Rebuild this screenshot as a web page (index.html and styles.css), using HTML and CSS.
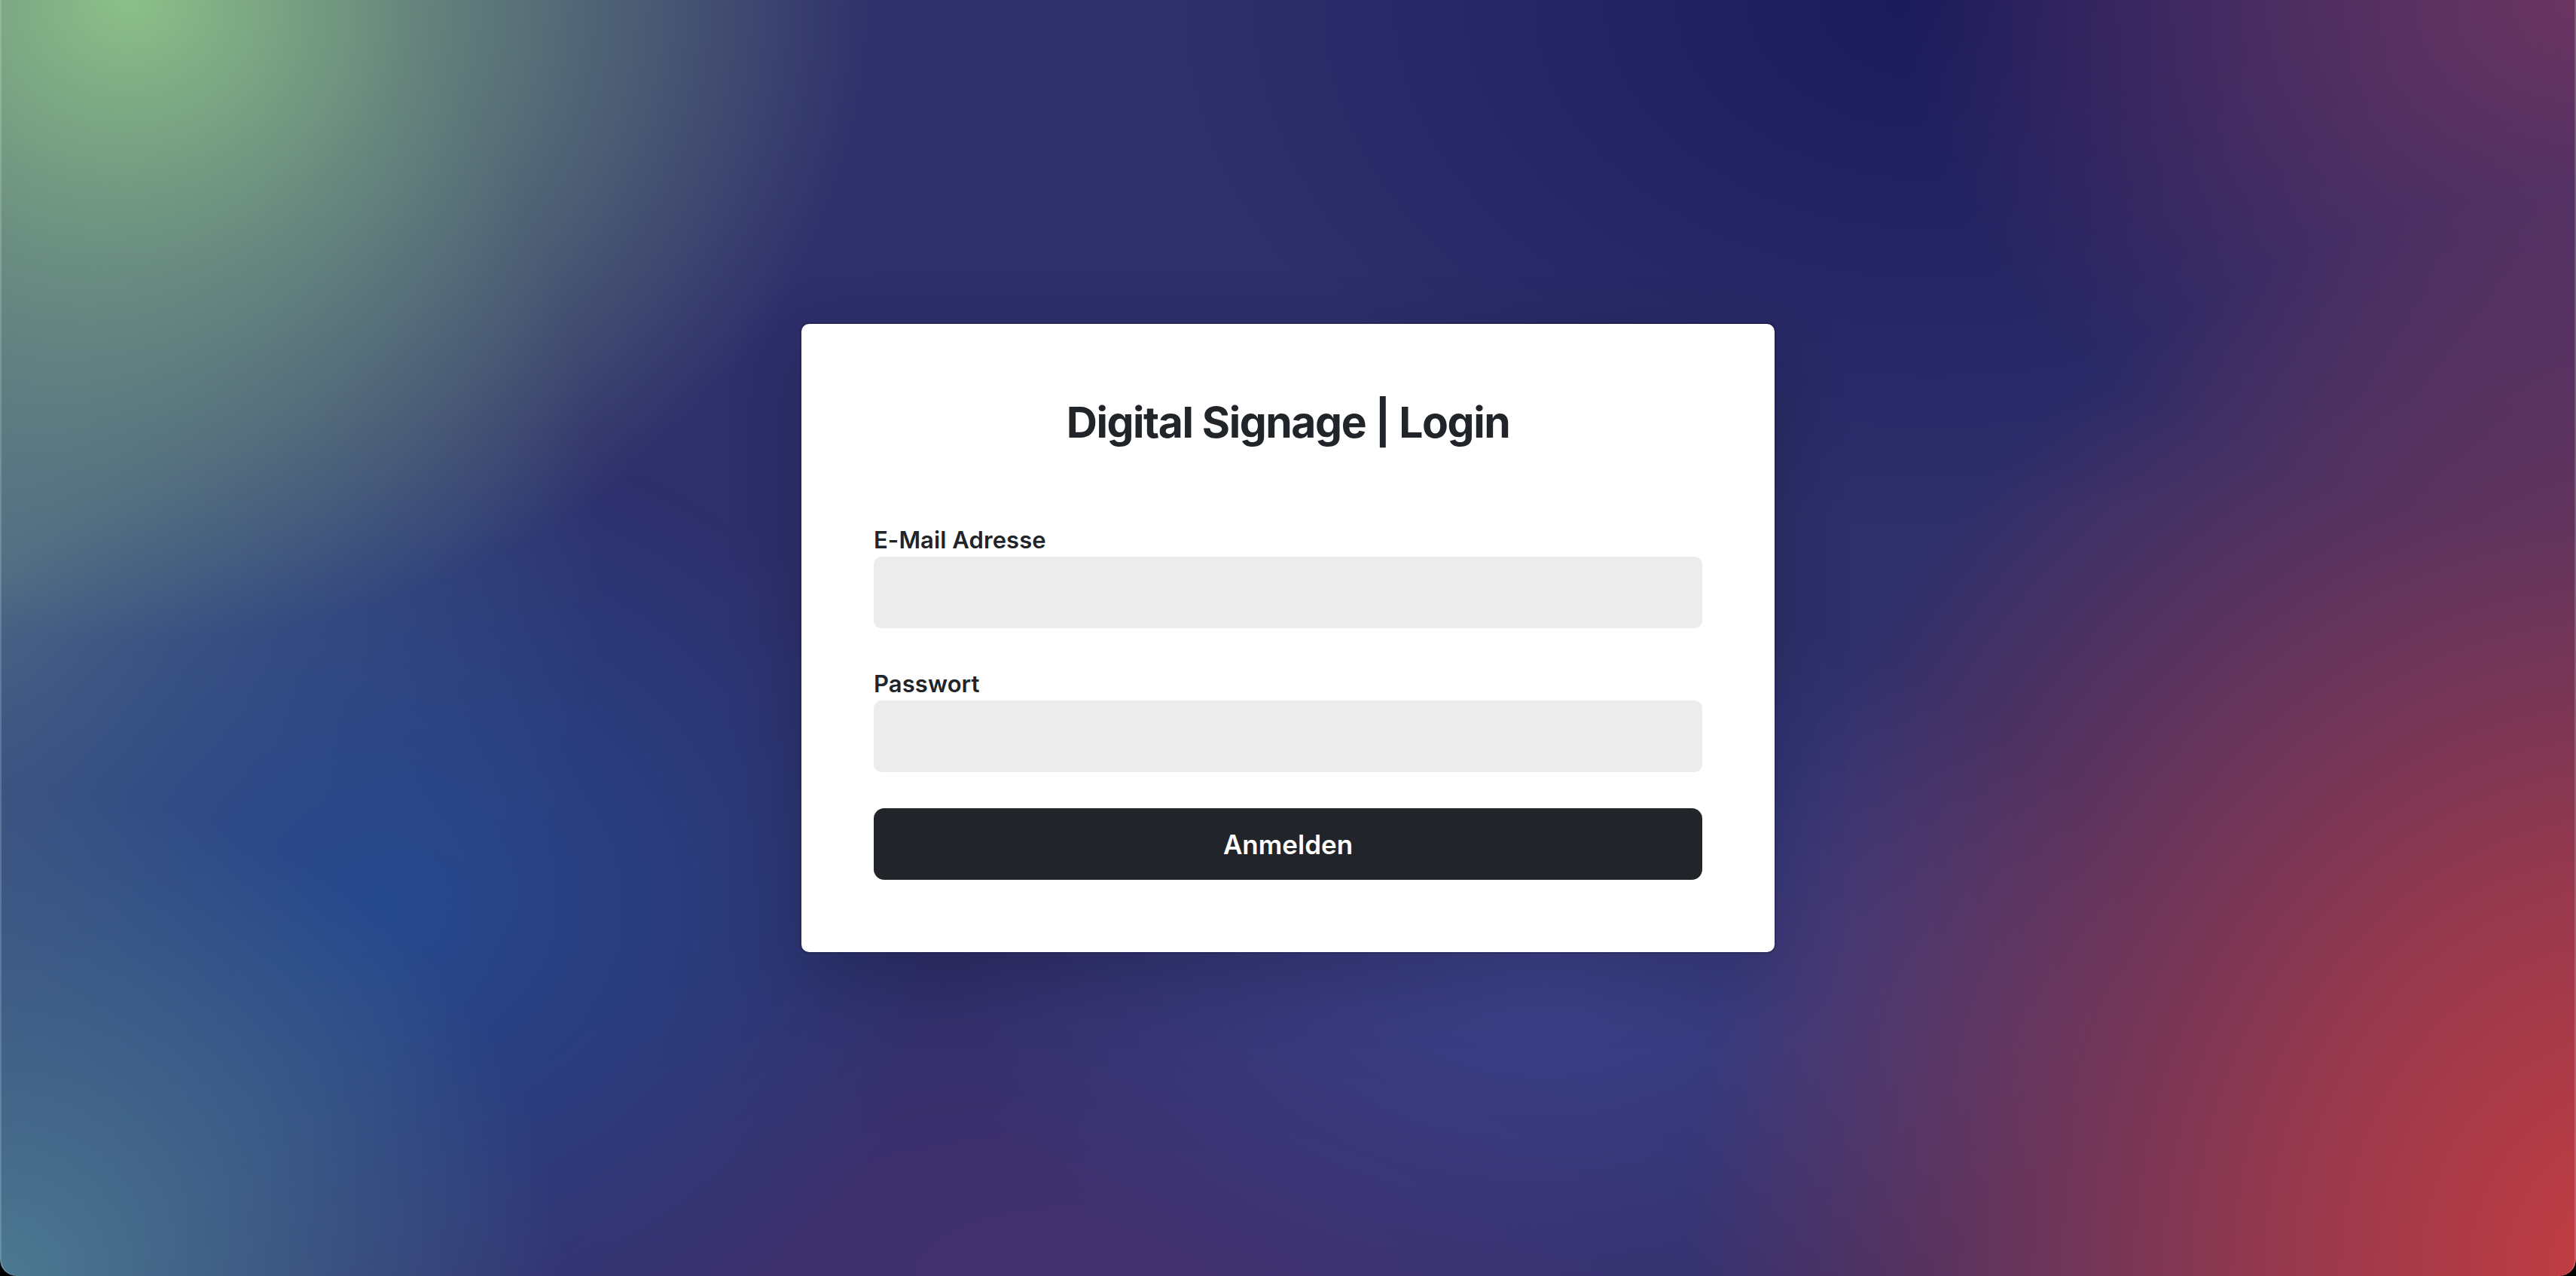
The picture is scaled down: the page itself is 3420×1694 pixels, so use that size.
FILE: index.html
```html
<!DOCTYPE html>
<html lang="de">
<head>
<meta charset="utf-8">
<title>Digital Signage | Login</title>
<link rel="stylesheet" href="styles.css">
</head>
<body>
<div class="window">
  <main class="card">
    <h1 class="title">Digital Signage | Login</h1>
    <form class="form">
      <div class="field">
        <label class="label" for="email">E-Mail Adresse</label>
        <input class="input" id="email" type="email">
      </div>
      <div class="field">
        <label class="label" for="password">Passwort</label>
        <input class="input" id="password" type="password">
      </div>
      <button class="btn" type="button">Anmelden</button>
    </form>
  </main>
</div>
</body>
</html>
```
FILE: styles.css
```css
* { box-sizing: border-box; }
html, body { margin: 0; padding: 0; background: #000; }
body {
  font-family: Inter, "Noto Sans", "Liberation Sans", sans-serif;
  color: #212529;
}
.window {
  width: 3420px;
  height: 1694px;
  border-radius: 0 0 22px 22px;
  overflow: hidden;
  display: flex;
  align-items: center;
  justify-content: center;
  box-shadow: inset 2px 0 0 rgba(255,255,255,0.18), inset -2px 0 0 rgba(255,255,255,0.18);
  background:
    radial-gradient(ellipse 1000px 850px at 5% 0%, rgba(140,192,136,1) 0%, rgba(140,192,136,0.55) 42%, rgba(140,192,136,0) 100%),
    radial-gradient(ellipse 750px 650px at 0% 100%, #4c7a92 0%, rgba(76,122,146,0) 100%),
    radial-gradient(ellipse 750px 650px at 15% 71%, #26498e 0%, rgba(38,73,142,0) 100%),
    radial-gradient(ellipse 800px 1000px at 0% 45%, rgba(80,110,135,0.9) 0%, rgba(80,110,135,0) 100%),
    radial-gradient(ellipse 1250px 1450px at 102% 100%, #c63d40 0%, rgba(198,61,64,0.7) 35%, rgba(198,61,64,0) 100%),
    radial-gradient(ellipse 900px 700px at 100% 0%, #6a3460 0%, rgba(106,52,96,0) 100%),
    radial-gradient(ellipse 1000px 700px at 75% 0%, #1a1b5c 0%, rgba(26,27,92,0) 100%),
    radial-gradient(ellipse 800px 500px at 60% 76%, #3c4189 0%, rgba(60,65,137,0) 100%),
    radial-gradient(ellipse 1100px 450px at 42% 100%, #44306e 0%, rgba(68,48,110,0) 100%),
    #2e2f6b;
}
.card {
  width: 1296px;
  padding: 96px;
  background: #fff;
  border: 2px solid rgba(0,0,0,0.175);
  border-radius: 12px;
  box-shadow: 0 32px 96px rgba(0,0,0,0.18);
  background-clip: padding-box;
}
.title {
  margin: 0 0 103px;
  font-size: 57px;
  line-height: 70px;
  font-weight: 700;
  text-align: center;
  letter-spacing: -1.4px;
}
.form {
  display: flex;
  flex-direction: column;
}
.field {
  display: flex;
  flex-direction: column;
  gap: 4px;
}
.field + .field { margin-top: 56px; }
.label {
  font-size: 31px;
  line-height: 36px;
  font-weight: 600;
  letter-spacing: 0.1px;
}
.input {
  height: 95px;
  border: none;
  border-radius: 10px;
  background: #ececec;
  font: inherit;
  font-size: 36px;
  padding: 0 30px;
}
.btn {
  margin-top: 48px;
  height: 95px;
  border: none;
  border-radius: 14px;
  background: #212529;
  color: #fff;
  font-family: inherit;
  font-size: 35px;
  font-weight: 600;
}
```
